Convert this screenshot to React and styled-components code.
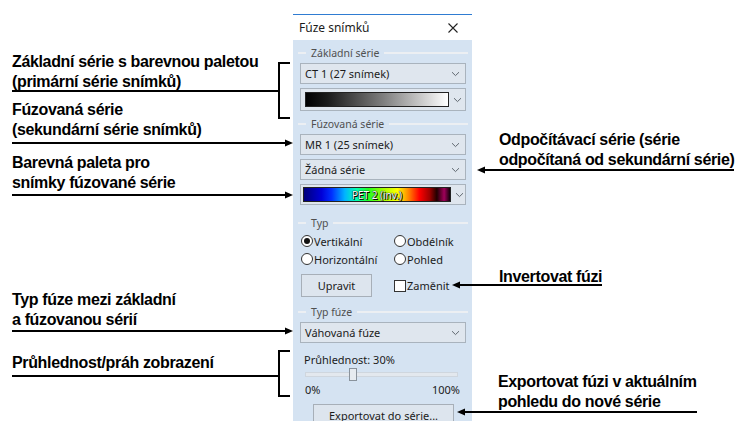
import React from "react";
import styled, { createGlobalStyle } from "styled-components";

const GlobalStyle = createGlobalStyle`
  html, body { margin: 0; padding: 0; background: #fff; }
  body { font-family: "Liberation Sans", Arial, sans-serif; }
`;

const Figure = styled.div`
  width: 736px;
  height: 421px;
  display: grid;
  grid-template-columns: 293px 179px 1fr;
  overflow: hidden;
`;

const LeftNotes = styled.div`
  display: flex;
  flex-direction: column;
  padding-left: 12px;
  position: relative;
  z-index: 2;
`;

const RightNotes = styled.div`
  display: flex;
  flex-direction: column;
  align-items: flex-start;
  position: relative;
  z-index: 2;
`;

const Callout = styled.div`
  display: flex;
  align-items: flex-end;
  margin-top: ${(p) => p.$top}px;
  margin-left: ${(p) => p.$left || 0}px;
`;

const NoteText = styled.div`
  flex: ${(p) => (p.$grow ? "1" : "none")};
  padding-left: ${(p) => p.$indent || 0}px;
  border-bottom: 2px solid #000;
  font: bold 16px/20px "Liberation Sans", Arial, sans-serif;
  letter-spacing: -0.35px;
  color: #000;
  white-space: nowrap;
`;

const Lines = styled.div`
  margin-bottom: ${(p) => p.$m}px;
`;

const Bracket = styled.div`
  flex: none;
  box-sizing: border-box;
  width: 12px;
  height: ${(p) => p.$up + p.$down}px;
  margin-bottom: -${(p) => p.$down}px;
  margin-right: 3px;
  border: 2px solid #000;
  border-right: none;
`;

const ArrowBox = styled.svg`
  flex: none;
  display: block;
  margin-bottom: -3px;
`;

const ArrowRight = () => (
  <ArrowBox width="10" height="8" viewBox="0 0 10 8">
    <rect x="0" y="3" width="4" height="2" fill="#000" />
    <polygon points="2,0.5 10,4 2,7.5" fill="#000" />
  </ArrowBox>
);

const ArrowLeft = () => (
  <ArrowBox width="8" height="8" viewBox="0 0 8 8">
    <rect x="4" y="3" width="4" height="2" fill="#000" />
    <polygon points="0,4 8,0.5 8,7.5" fill="#000" />
  </ArrowBox>
);

/* ---------- dialog ---------- */

const PanelCol = styled.div`
  padding-top: 14px;
  display: flex;
  flex-direction: column;
  position: relative;
  z-index: 1;
`;

const Panel = styled.div`
  flex: 1;
  display: flex;
  flex-direction: column;
  border-top: 1px solid #2f7cd2;
  font-family: "Noto Sans", "Open Sans", sans-serif;
  color: #1b1b1b;
`;

const TitleBar = styled.div`
  height: 25px;
  background: #fff;
  display: flex;
  align-items: center;
  justify-content: space-between;
  padding: 0 14px 0 6px;
  font-size: 12px;
`;

const Body = styled.div`
  flex: 1;
  background: #d5e3f2;
  padding: 0 6px 0 7px;
  display: flex;
  flex-direction: column;
`;

const GroupHeader = styled.div`
  display: flex;
  align-items: center;
  height: 16px;
  margin: ${(p) => p.$mt}px -2px ${(p) => p.$mb}px -2px;
  font-size: 10.5px;
  color: #505050;
  &::before,
  &::after {
    content: "";
    height: 2px;
    background: #eceff3;
  }
  &::before {
    width: 8px;
    margin-right: 5px;
  }
  &::after {
    flex: 1;
    margin-left: 5px;
  }
`;

const Combo = styled.div`
  box-sizing: border-box;
  height: ${(p) => p.$h || 21}px;
  margin-bottom: ${(p) => p.$mb || 0}px;
  border: 1px solid #a9b3bd;
  background: #dfe6ee;
  display: flex;
  align-items: center;
  padding-left: ${(p) => p.$pl ?? 4}px;
  font-size: 11px;
`;

const ComboLabel = styled.span`
  flex: 1;
`;

const Swatch = styled.div`
  flex: none;
  box-sizing: border-box;
  width: ${(p) => p.$w}px;
  height: ${(p) => p.$h}px;
  margin-right: auto;
  border: 1px solid #222;
  background: ${(p) => p.$bg};
  display: flex;
  align-items: center;
  justify-content: center;
  color: #fff;
  font-size: 10px;
  text-shadow: 0 0 1px #000, 0 0 1px #000, 1px 1px 0 #000;
`;

const ChevronSvg = styled.svg`
  flex: none;
  margin: 0 5px 0 4px;
`;

const Chevron = () => (
  <ChevronSvg width="9" height="6" viewBox="0 0 9 6">
    <path d="M1 1.2l3.5 3.4L8 1.2" stroke="#606870" strokeWidth="1" fill="none" />
  </ChevronSvg>
);

const RadioGrid = styled.div`
  display: grid;
  grid-template-columns: 93px 1fr;
  margin-left: 1px;
`;

const Choice = styled.div`
  display: flex;
  align-items: center;
  height: 18px;
  font-size: 11px;
  gap: 1px;
`;

const RadioDot = styled.span`
  box-sizing: border-box;
  width: 12px;
  height: 12px;
  border-radius: 50%;
  border: 1px solid #333;
  background: #fff;
  display: flex;
  align-items: center;
  justify-content: center;
  &::after {
    content: "";
    width: 6px;
    height: 6px;
    border-radius: 50%;
    background: ${(p) => (p.$on ? "#111" : "transparent")};
  }
`;

const CheckBox = styled.span`
  box-sizing: border-box;
  width: 12px;
  height: 12px;
  border: 1px solid #333;
  background: #fff;
`;

const ActionRow = styled.div`
  display: grid;
  grid-template-columns: 93px 1fr;
  align-items: center;
  margin: 6px 0 0 1px;
`;

const Button = styled.div`
  box-sizing: border-box;
  width: ${(p) => p.$w}px;
  height: ${(p) => p.$h}px;
  margin-left: ${(p) => p.$ml || 0}px;
  margin-top: ${(p) => p.$mt || 0}px;
  border: 1px solid #a7afb8;
  background: #dde5ee;
  display: flex;
  align-items: center;
  justify-content: center;
  font-size: 11px;
`;

const SliderLabel = styled.div`
  margin: 9px 0 0 4px;
  height: 15px;
  line-height: 15px;
  font-size: 11px;
`;

const Track = styled.div`
  position: relative;
  height: 14px;
  margin: 0 8px 0 5px;
  display: flex;
  align-items: center;
  &::before {
    content: "";
    flex: 1;
    height: 3px;
    background: #e3e8ee;
    border: 1px solid #cfd6de;
  }
`;

const Thumb = styled.span`
  position: absolute;
  top: 1px;
  box-sizing: border-box;
  width: 8px;
  height: 13px;
  border: 1px solid #8a939c;
  background: #e6ebf0;
`;

const Scale = styled.div`
  display: flex;
  justify-content: space-between;
  height: 14px;
  line-height: 14px;
  margin: 2px 6px 0 5px;
  font-size: 11px;
`;

const grey = "linear-gradient(to right, #000 0%, #1a1a1a 15%, #808080 55%, #fff 100%)";
const pet =
  "linear-gradient(to right, #00007a 0%, #0000d8 12%, #0030ff 19%, #00b4ff 28%, #00ffb0 36%, #20ff20 44%, #a0ff00 54%, #ffff00 64%, #ff9000 71%, #ff0000 79%, #a00000 86%, #200000 91%, #a0005a 96%, #100008 100%)";

export default function App() {
  return (
    <>
      <GlobalStyle />
      <Figure>
        <LeftNotes>
          <Callout $top={52}>
            <NoteText $grow>
              <Lines $m={-2}>
                Základní série s barevnou paletou
                <br />
                (primární série snímků)
              </Lines>
            </NoteText>
            <Bracket $up={30} $down={27} />
          </Callout>
          <Callout $top={8}>
            <NoteText $grow>
              <Lines $m={2}>
                Fúzovaná série
                <br />
                (sekundární série snímků)
              </Lines>
            </NoteText>
            <ArrowRight />
          </Callout>
          <Callout $top={9}>
            <NoteText $grow>
              <Lines $m={1}>
                Barevná paleta pro
                <br />
                snímky fúzované série
              </Lines>
            </NoteText>
            <ArrowRight />
          </Callout>
          <Callout $top={94}>
            <NoteText $grow>
              <Lines $m={0}>
                Typ fúze mezi základní
                <br />a fúzovanou sérií
              </Lines>
            </NoteText>
            <ArrowRight />
          </Callout>
          <Callout $top={18}>
            <NoteText $grow>
              <Lines $m={2}>Průhlednost/práh zobrazení</Lines>
            </NoteText>
            <Bracket $up={27} $down={20} />
          </Callout>
        </LeftNotes>

        <PanelCol>
          <Panel>
            <TitleBar>
              <span>Fúze snímků</span>
              <svg width="10" height="10" viewBox="0 0 10 10">
                <path d="M0.5 0.5l9 9M9.5 0.5l-9 9" stroke="#222" strokeWidth="1.1" />
              </svg>
            </TitleBar>
            <Body>
              <GroupHeader $mt={5} $mb={2}>Základní série</GroupHeader>
              <Combo $mb={4}>
                <ComboLabel>CT 1 (27 snímek)</ComboLabel>
                <Chevron />
              </Combo>
              <Combo $h={23} $pl={4}>
                <Swatch $w={144} $h={15} $bg={grey} />
                <Chevron />
              </Combo>
              <GroupHeader $mt={5} $mb={2}>Fúzovaná série</GroupHeader>
              <Combo $mb={4}>
                <ComboLabel>MR 1 (25 snímek)</ComboLabel>
                <Chevron />
              </Combo>
              <Combo $mb={4}>
                <ComboLabel>Žádná série</ComboLabel>
                <Chevron />
              </Combo>
              <Combo $h={21} $pl={2}>
                <Swatch $w={148} $h={15} $bg={pet}>PET 2 (inv.)</Swatch>
                <Chevron />
              </Combo>
              <GroupHeader $mt={10} $mb={1}>Typ</GroupHeader>
              <RadioGrid>
                <Choice>
                  <RadioDot $on />
                  Vertikální
                </Choice>
                <Choice>
                  <RadioDot />
                  Obdélník
                </Choice>
                <Choice>
                  <RadioDot />
                  Horizontální
                </Choice>
                <Choice>
                  <RadioDot />
                  Pohled
                </Choice>
              </RadioGrid>
              <ActionRow>
                <Button $w={71} $h={23}>Upravit</Button>
                <Choice>
                  <CheckBox />
                  Zaměnit
                </Choice>
              </ActionRow>
              <GroupHeader $mt={7} $mb={2}>Typ fúze</GroupHeader>
              <Combo>
                <ComboLabel>Váhovaná fúze</ComboLabel>
                <Chevron />
              </Combo>
              <SliderLabel>Průhlednost: 30%</SliderLabel>
              <Track>
                <Thumb style={{ left: `${0.3 * 145}px` }} />
              </Track>
              <Scale>
                <span>0%</span>
                <span>100%</span>
              </Scale>
              <Button $w={141} $h={22} $ml={13} $mt={7}>
                Exportovat do série...
              </Button>
            </Body>
          </Panel>
        </PanelCol>

        <RightNotes>
          <Callout $top={130} $left={5}>
            <ArrowLeft />
            <NoteText $indent={14}>
              <Lines $m={-1}>
                Odpočítávací série (série
                <br />
                odpočítaná od sekundární série)
              </Lines>
            </NoteText>
          </Callout>
          <Callout $top={96} $left={-20}>
            <ArrowLeft />
            <NoteText $indent={39}>
              <Lines $m={-3}>Invertovat fúzi</Lines>
            </NoteText>
          </Callout>
          <Callout $top={86} $left={-15}>
            <ArrowLeft />
            <NoteText $indent={33}>
              <Lines $m={-1}>
                Exportovat fúzi v aktuálním
                <br />
                pohledu do nové série
              </Lines>
            </NoteText>
          </Callout>
        </RightNotes>
      </Figure>
    </>
  );
}
